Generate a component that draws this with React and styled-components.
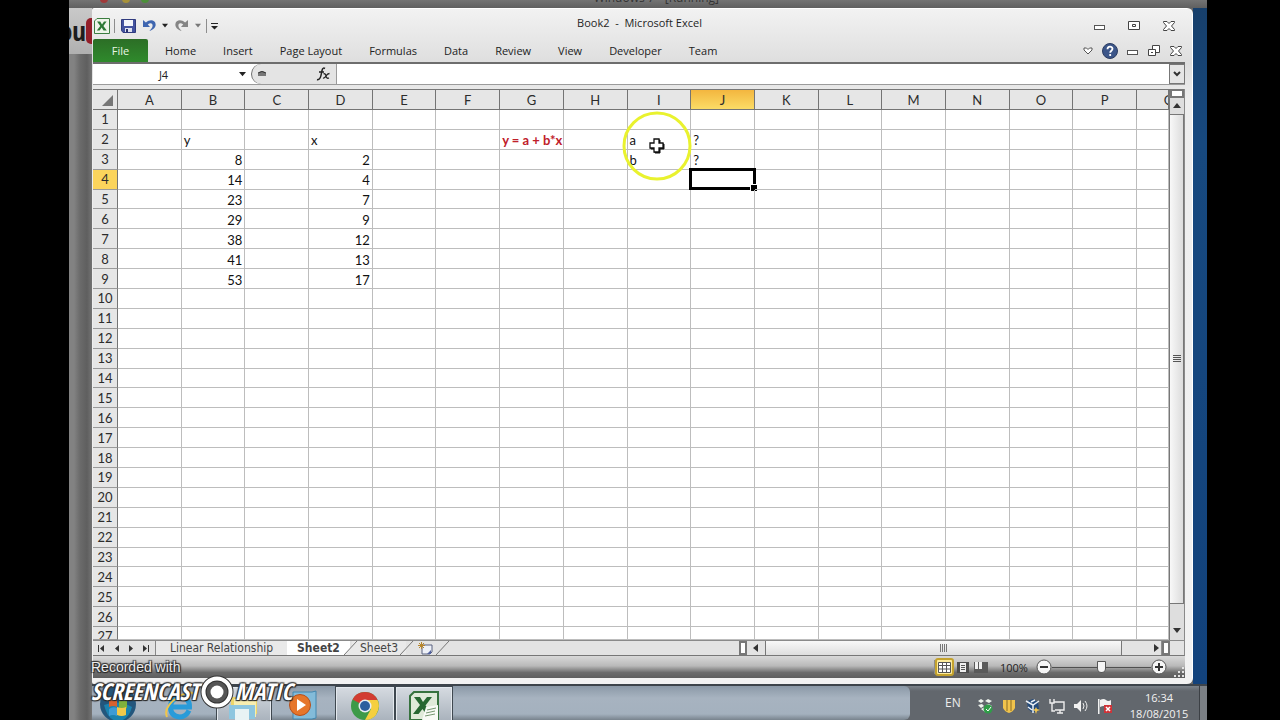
import React from "react";
import styled, { createGlobalStyle, css } from "styled-components";

const ui = `"Open Sans", "Noto Sans", sans-serif`;
const sheetFont = `Lato, "Open Sans", sans-serif`;
const tabFont = `"DejaVu Sans Condensed", "DejaVu Sans", sans-serif`;
const narrow = `"Open Sans Condensed", "Open Sans", sans-serif`;

const GlobalStyle = createGlobalStyle`
  * { box-sizing: border-box; }
  body { margin: 0; background: #000; overflow: hidden; font-family: ${ui}; }
  button, input { font: inherit; color: inherit; margin: 0; padding: 0; border: 0; background: none; outline: none; }
  svg { display: block; flex: none; }
`;

/* ---------- desktop ---------- */
const Desktop = styled.div`
  height: 100vh;
  margin: 0 73px 0 69px;
  position: relative;
  display: grid;
  grid-template-columns: 23px minmax(0, 1fr) 14px;
  grid-template-rows: 8px minmax(0, 1fr) 36px;
  background: #686868;
`;
const BackWindowEdge = styled.div`
  grid-column: 1 / -1;
  height: 8px;
  overflow: hidden;
  display: flex;
  justify-content: space-between;
  padding: 0 488px 0 26px;
  background: linear-gradient(#747474, #606060);
`;
const BackTitle = styled.span`
  font-size: 12px;
  line-height: 12px;
  margin-top: -8px;
  color: #333;
`;
const BackPage = styled.div`
  grid-row: 2 / 4;
  overflow: hidden;
  background: linear-gradient(90deg, #828282 0 5px, #6b6b6b 11px, #5f5f5f 18px, #747474);
`;
const Wallpaper = styled.div`
  background: linear-gradient(#173f6b, #17497f 20%, #12427c);
`;
const Logo = styled.div`
  display: flex;
  align-items: center;
  justify-content: flex-end;
  height: 46px;
  width: 23px;
  overflow: hidden;
  background: linear-gradient(#c9c9c9, #b0b0b0);
  font: bold 27px/40px ${narrow};
  color: #1d1d1d;
`;
const LogoRed = styled.span`
  flex: none;
  width: 6px;
  height: 26px;
  border-radius: 5px 0 0 5px;
  background: #931f2a;
`;

/* ---------- window ---------- */
const Window = styled.main`
  display: flex;
  flex-direction: column;
  min-width: 0;
  padding: 0 7px 6px 1px;
  border-radius: 2px 6px 6px 2px;
  border-top: 1px solid #fff;
  border-right: 1px solid #fff;
  background: linear-gradient(#f2f2f2, #dedede 54px, #ededed 90px, #f2f2f2);
`;
const TitleBar = styled.header`
  display: grid;
  grid-template-columns: 1fr auto 1fr;
  height: 30px;
  padding: 3px 0 0 1px;
`;
const Title = styled.h1`
  margin: 0;
  font-size: 11px;
  line-height: 22px;
  font-weight: 400;
  white-space: pre;
  color: #1f1f1f;
`;
const Tools = styled.div`
  display: flex;
  align-items: center;
  gap: ${(p) => p.$gap || 0}px;
  padding-right: ${(p) => p.$inset || 0}px;
  justify-content: ${(p) => (p.$end ? "flex-end" : "flex-start")};
`;
const IconButton = styled.button`
  display: flex;
  align-items: center;
  justify-content: center;
  width: ${(p) => p.$w || 16}px;
  height: ${(p) => p.$h || 18}px;
  flex: none;
`;
const Rule = styled.span`
  width: 1px;
  height: 14px;
  background: #8d8d8d;
`;
const Ribbon = styled.nav`
  display: flex;
  align-items: stretch;
  height: 25px;
  padding-right: 1px;
  border-bottom: 2px solid #6d6d6d;
`;
const RibbonTab = styled.button`
  padding: 0 13px 0 14px;
  font-size: 11px;
  line-height: 23px;
  color: #222;
  white-space: nowrap;
  ${(p) =>
    p.$file &&
    css`
      width: 55px;
      padding: 0;
      margin-right: 3px;
      border-radius: 2px 2px 0 0;
      background: linear-gradient(#2c6e26, #2f8a2c);
      color: #e9f6e4;
    `}
`;
const Spring = styled.span`
  flex: 1;
`;
const FormulaBar = styled.div`
  display: flex;
  height: 21px;
  background: #fff;
  border-bottom: 1px solid #9b9b9b;
`;
const NameBox = styled.input`
  width: 141px;
  text-align: center;
  font-size: 11px;
  color: #222;
`;
const FxZone = styled.div`
  display: flex;
  align-items: center;
  justify-content: space-between;
  width: 86px;
  padding: 0 5px 0 6px;
  margin-left: 1px;
  border-left: 1px solid #6d6d6d;
  border-right: 1px solid #9b9b9b;
  border-radius: 10px 0 0 10px;
  background: #e4e4e4;
`;
const FormulaInput = styled.input`
  flex: 1;
  min-width: 0;
  font-size: 11px;
`;
const Expand = styled(IconButton)`
  width: 16px;
  height: 20px;
  border: 1px solid #777;
  background: #e6e6e6;
`;
const Work = styled.section`
  flex: 1;
  min-height: 0;
  display: grid;
  grid-template-columns: minmax(0, 1fr) 15px;
  margin-top: 4px;
  border-right: 1px solid #8a8a8a;
`;
const GridArea = styled.div`
  min-width: 0;
  min-height: 0;
  overflow: hidden;
  background: #fff;
  border-top: 1px solid #777;
`;

/* ---------- cells ---------- */
const Sheet = styled.table`
  width: 100%;
  height: 100%;
  table-layout: fixed;
  border-collapse: separate;
  border-spacing: 0;
  font-family: ${sheetFont};
  font-size: 13px;
`;
const Head = styled.th`
  padding: 0;
  height: ${(p) => (p.$row ? "auto" : "20px")};
  line-height: ${(p) => (p.$short ? 12 : 18)}px;
  font-weight: 400;
  color: #2c2c2c;
  overflow: hidden;
  border-right: 1px solid #747474;
  border-bottom: 1px solid ${(p) => (p.$row ? "#9a9a9a" : "#747474")};
  background: ${(p) => (p.$on ? (p.$row ? "#fbd45c" : "linear-gradient(#f3b63f, #fbdc66)") : "#e6e6e6")};
`;
const PartialHead = styled.span`
  display: block;
  width: 64px;
  height: 18px;
`;
const PartialRow = styled.div`
  height: 11px;
  line-height: 16px;
`;
const Cell = styled.td`
  border-right: 1px solid #bdbdbd;
  border-bottom: 1px solid #bdbdbd;
  position: relative;
  padding: 2px 2px 0;
  line-height: 16px;
  text-align: ${(p) => (p.$num ? "right" : "left")};
  color: ${(p) => (p.$red ? "#c0202a" : "#111")};
  font-weight: ${(p) => (p.$red ? 700 : 400)};
  white-space: nowrap;
`;
const Selection = styled.span`
  position: absolute;
  inset: -2px -2px -1px -2px;
  border: 3px solid #000;
  &::after {
    content: "";
    position: absolute;
    right: -4px;
    bottom: -4px;
    width: 6px;
    height: 6px;
    border: solid #fff;
    border-width: 1px 0 0 1px;
    background: #000;
  }
`;
const Pointer = styled.svg`
  position: absolute;
  left: -6px;
  top: -19px;
  z-index: 3;
`;

/* ---------- scroll bars ---------- */
const VScroll = styled.div`
  display: flex;
  flex-direction: column;
  align-items: stretch;
  background: #dedede;
  border-left: 1px solid #777;
`;
const SplitV = styled.span`
  height: 9px;
  border: 2px solid #777;
  background: #fff;
`;
const ThumbV = styled.div`
  height: 490px;
  flex: 0 1 auto;
  min-height: 0;
  display: flex;
  align-items: center;
  justify-content: center;
  border: 1px solid #777;
  border-left: 0;
  background: linear-gradient(90deg, #f8f8f8, #dcdcdc);
`;
const Bottom = styled.div`
  display: flex;
  height: 16px;
  border-top: 1px solid #8a8a8a;
  border-bottom: 1px solid #777;
  border-right: 1px solid #8a8a8a;
  background: #e3e3e3;
`;
const NavButtons = styled.div`
  display: flex;
  width: 62px;
  padding-left: 1px;
`;
const SheetTab = styled.button`
  width: ${(p) => p.$w}px;
  font-family: ${tabFont};
  font-size: 12px;
  line-height: 14px;
  font-weight: ${(p) => (p.$on ? 700 : 400)};
  color: #444;
  background: ${(p) => (p.$on ? "#fff" : "#e9e9e9")};
  border-left: ${(p) => (p.$edge ? "1px solid #888" : 0)};
  white-space: nowrap;
`;
const Slant = styled.svg`
  margin: 0 -6px;
  position: relative;
`;
const HScroll = styled.div`
  display: flex;
  align-items: stretch;
  width: 431px;
  margin-right: 14px;
`;
const SplitH = styled.span`
  width: 8px;
  border: 2px solid #777;
  background: #fff;
`;
const ThumbH = styled.div`
  flex: 1;
  display: flex;
  align-items: center;
  justify-content: center;
  border: solid #777;
  border-width: 0 1px;
  background: linear-gradient(#f8f8f8, #dedede);
`;
const StatusBar = styled.footer`
  display: flex;
  align-items: center;
  height: 22px;
  padding-left: 4px;
  color: #222;
  background: linear-gradient(#d9d9d9, #b9b9b9 45%, #6c6c6c 75%, #5e5e5e);
`;
const Zoom = styled.span`
  width: 30px;
  margin: 0 6px 0 10px;
  font-size: 11px;
`;
const ViewButton = styled(IconButton)`
  width: ${(p) => (p.$on ? 19 : 18)}px;
  ${(p) =>
    p.$on &&
    css`
      border: 2px solid #c4a22d;
      border-radius: 3px;
      background: #fdeb9a;
    `}
`;
const Slider = styled.input`
  appearance: none;
  width: 99px;
  height: 16px;
  background: linear-gradient(#4f4f4f, #4f4f4f) center / 100% 1px no-repeat;
  &::-webkit-slider-thumb {
    appearance: none;
    width: 9px;
    height: 12px;
    border: 1px solid #555;
    border-radius: 1px 1px 5px 5px;
    background: #f5f5f5;
  }
`;
const Grip = styled.svg`
  align-self: flex-end;
  margin-left: 5px;
`;

/* ---------- taskbar ---------- */
const Taskbar = styled.div`
  grid-column: 2 / 4;
  display: flex;
  border-top: 2px solid #3d444b;
  background: linear-gradient(#7b828a, #62676d 5px, #62676d);
  overflow: hidden;
`;
const TaskApps = styled.div`
  display: flex;
  flex: 1;
  min-width: 0;
  margin-right: 35px;
  border-radius: 0 6px 6px 0;
  background: linear-gradient(#8b99a7, #a7b3c0 12px, #a4b1be 28px, #78838d);
`;
const AppButton = styled.button`
  display: flex;
  justify-content: center;
  align-items: flex-start;
  width: ${(p) => p.$w}px;
  padding-top: ${(p) => p.$top || 4}px;
  flex: none;
  ${(p) =>
    p.$open &&
    css`
      border: 1px solid #3f4850;
      border-bottom: 0;
      box-shadow: inset 1px 1px 0 #e4e9ee, inset -1px 0 0 #e4e9ee;
      background: linear-gradient(#d6dbe1, #aab3bd);
    `}
`;
const Tray = styled.div`
  display: flex;
  align-items: center;
  gap: 8px;
  padding-top: 5px;
  margin-right: 6px;
  color: #eee;
`;
const Lang = styled.span`
  width: 24px;
  margin-bottom: 6px;
  font-size: 12px;
  line-height: 16px;
`;
const Clock = styled.time`
  display: flex;
  flex-direction: column;
  align-items: center;
  width: 80px;
  margin-top: 4px;
  flex: none;
  font-size: 11px;
  line-height: 16px;
  color: #f2f2f2;
`;
const ShowDesktop = styled.button`
  width: 8px;
  border-left: 1px solid #3c4045;
  background: #7b8085;
`;
const Watermark = styled.div`
  position: absolute;
  left: 22px;
  bottom: 12px;
  z-index: 5;
  color: #fff;
  text-shadow: 1px 1px 1px #222, -1px -1px 1px #333, 1px -1px 1px #333, -1px 1px 1px #333;
`;
const Recorded = styled.div`
  font: 14px/16px "Liberation Sans", sans-serif;
  color: #eee;
`;
const Brand = styled.div`
  display: flex;
  align-items: center;
  height: 33px;
  font: italic bold 23px/33px ${narrow};
`;

/* ---------- small drawings ---------- */
const Tri = ({ dir = "down", s = 7, c = "#333" }) => {
  const d = { down: "M0 1h8L4 6z", up: "M0 6h8L4 1z", left: "M6 0v8L1 4z", right: "M1 0v8l5-4z" }[dir];
  return (
    <svg width={s} height={s} viewBox="0 0 8 8"><path d={d} fill={c} /></svg>
  );
};
const MinIcon = () => (
  <svg width="12" height="12" viewBox="0 0 12 12"><rect x="1.5" y="5.5" width="10" height="4" fill="#fff" stroke="#555" /></svg>
);
const MaxIcon = () => (
  <svg width="12" height="12" viewBox="0 0 12 12"><path d="M.5 1.500h11v8H.5zM4.500 4.500h3v2h-3z" fill="#fff" stroke="#444" /></svg>
);
const RestoreIcon = () => (
  <svg width="12" height="12" viewBox="0 0 12 12" fill="#fff" stroke="#444"><path d="M4.500.5h7v7h-7z" /><path d="M.5 4.500h7v6h-7z" /><path d="M3 7.500h2" /></svg>
);
const CloseIcon = () => (
  <svg width="12" height="12" viewBox="0 0 12 12"><path d="M.5 1.500h3.500l2 2 2-2h3.500v1L8.500 6l3 3.500v1H8l-2-2-2 2H.500v-1L3.500 6l-3-3.500z" fill="#fff" stroke="#444" /></svg>
);
const ExcelSmall = () => (
  <svg width="16" height="16" viewBox="0 0 16 16">
    <path d="M3 .5h12.500v15H.5V3z" fill="#eef5ea" stroke="#3b7d40" />
    <path d="M3 3.500h3.200L8 6.500l2-3h2.600L9.400 8l3.400 4.500H9.500L7.700 9.600 5.600 12.500H2.800L6.300 8z" fill="#2c7a35" />
  </svg>
);
const SaveIcon = () => (
  <svg width="15" height="14" viewBox="0 0 15 14">
    <path d="M.5.5h14v13H2l-1.500-2z" fill="#4353a0" stroke="#303b7e" /><path d="M3 1h9v6H3z" fill="#f2f4fa" /><path d="M4 9h7v4H4z" fill="#dde1f0" /><path d="M5 10h2v3H5z" fill="#2b3470" />
  </svg>
);
const UndoIcon = ({ flip, c }) => (
  <svg width="13" height="13" viewBox="0 0 13 13">
    <g transform={flip ? "matrix(-1 0 0 1 13 0)" : undefined}>
      <path d="M0 1v7h7L4.800 5.600C7 3.600 9.500 4 9.600 6.500c0 2-1.400 3.600-3.200 5.500C10.500 10.500 13 8.500 12.600 5 12 1 7 0 2.900 3.500z" fill={c} />
    </g>
  </svg>
);
const HelpIcon = () => (
  <svg width="16" height="16" viewBox="0 0 16 16">
    <circle cx="8" cy="8" r="7.500" fill="#3c5689" stroke="#2c3d62" />
    <path d="M5.500 6.200c0-3.400 5-3.200 5-.4 0 1.900-2.300 1.900-2.300 3.900M8.200 11v2" fill="none" stroke="#fff" strokeWidth="1.800" />
  </svg>
);
const NavIcon = ({ left, bar }) => (
  <svg width="9" height="9" viewBox="0 0 9 9" fill="#333">
    <g transform={left ? undefined : "matrix(-1 0 0 1 9 0)"}><path d="M7 1v7L3 4.500z" />{bar && <path d="M1 1h1v7H1z" />}</g>
  </svg>
);

const cols = "ABCDEFGHIJKLMNOP".split("");
const data = {
  B2: "y", D2: "x", G2: "y = a + b*x", I2: "a", J2: "?", I3: "b", J3: "?",
  B3: 8, B4: 14, B5: 23, B6: 29, B7: 38, B8: 41, B9: 53,
  D3: 2, D4: 4, D5: 7, D6: 9, D7: 12, D8: 13, D9: 17,
};
const rows = Array.from({ length: 26 }, (_, i) => i + 1);
const tabs = ["Home", "Insert", "Page Layout", "Formulas", "Data", "Review", "View", "Developer", "Team"];

function Grid() {
  return (
    <Sheet>
      <colgroup>
        <col width="25" />
        {cols.map((c) => <col key={c} />)}
        <col width="32" />
      </colgroup>
      <thead>
        <tr>
          <Head><svg width="24" height="18" viewBox="0 0 24 18"><path d="M20 4v11H9z" fill="#777" /></svg></Head>
          {cols.map((c) => <Head key={c} $on={c === "J"}>{c}</Head>)}
          <Head><PartialHead>Q</PartialHead></Head>
        </tr>
      </thead>
      <tbody>
        {rows.map((r) => (
          <tr key={r}>
            <Head scope="row" $row $on={r === 4}>{r}</Head>
            {[...cols, "Q"].map((c) => {
              const v = data[c + r];
              return (
                <Cell key={c} $num={typeof v === "number"} $red={c === "G"}>
                  {v}
                  {c + r === "J4" && <Selection />}
                  {c + r === "I2" && (
                    <Pointer width="70" height="70" viewBox="0 0 70 70">
                      <circle cx="35" cy="35" r="33" fill="none" stroke="#e9f22e" strokeWidth="3" />
                      <path d="M33 29h5v4h4v5h-4v4h-5v-4h-4v-5h4z" fill="#111" stroke="#111" />
                      <path d="M32 28h5v4h4v5h-4v4h-5v-4h-4v-5h4z" fill="#fff" stroke="#111" strokeWidth="1.300" />
                    </Pointer>
                  )}
                </Cell>
              );
            })}
          </tr>
        ))}
        <tr>
          <Head scope="row" $row $short><PartialRow>27</PartialRow></Head>
          {[...cols, "Q"].map((c) => <Cell key={c} />)}
        </tr>
      </tbody>
    </Sheet>
  );
}

export default function App() {
  return (
    <Desktop>
      <GlobalStyle />
      <BackWindowEdge>
        <svg width="60" height="8" viewBox="0 0 60 8"><circle cx="9" cy="-1" r="4" fill="#a03a3a" /><circle cx="31" cy="-1" r="4" fill="#a8923a" /><circle cx="50" cy="-1" r="4" fill="#4c8f3a" /></svg>
        <BackTitle>Windows 7 - [Running]</BackTitle>
      </BackWindowEdge>
      <BackPage><Logo>ou<LogoRed /></Logo></BackPage>

      <Window>
        <TitleBar>
          <Tools>
            <IconButton aria-label="Excel"><ExcelSmall /></IconButton>
            <Tools $gap={4}>
              <span />
              <Rule />
              <IconButton aria-label="Save" $w={18}><SaveIcon /></IconButton>
            </Tools>
            <IconButton aria-label="Undo" $w={24}><UndoIcon c="#3f66b0" /></IconButton>
            <IconButton aria-label="Undo list" $w={8}><Tri s={6} c="#222" /></IconButton>
            <IconButton aria-label="Redo" $w={24}><UndoIcon flip c="#858585" /></IconButton>
            <IconButton aria-label="Redo list" $w={10}><Tri s={6} c="#777" /></IconButton>
            <Tools $gap={3}>
              <span />
              <Rule />
              <IconButton aria-label="Customize" $w={8}>
                <svg width="7" height="8" viewBox="0 0 7 8" fill="#222"><path d="M0 1h7v1H0zM0 4h7L3.500 7.500z" /></svg>
              </IconButton>
            </Tools>
          </Tools>
          <Title>{"Book2  -  Microsoft Excel"}</Title>
          <Tools $end $gap={19} $inset={8}>
            <IconButton aria-label="Minimize"><MinIcon /></IconButton>
            <IconButton aria-label="Maximize"><MaxIcon /></IconButton>
            <IconButton aria-label="Close"><CloseIcon /></IconButton>
          </Tools>
        </TitleBar>
        <Ribbon>
          <RibbonTab $file>File</RibbonTab>
          {tabs.map((t) => <RibbonTab key={t}>{t}</RibbonTab>)}
          <Spring />
          <Tools $end $gap={6}>
            <IconButton aria-label="Ribbon"><svg width="10" height="8" viewBox="0 0 10 8"><path d="M1 1h2.500L5 2.500 6.500 1H9v2L5 7 1 3z" fill="#fff" stroke="#555" /></svg></IconButton>
            <IconButton aria-label="Help"><HelpIcon /></IconButton>
            <IconButton aria-label="Minimize book"><MinIcon /></IconButton>
            <IconButton aria-label="Restore book"><RestoreIcon /></IconButton>
            <IconButton aria-label="Close book"><CloseIcon /></IconButton>
          </Tools>
        </Ribbon>
        <FormulaBar>
          <NameBox aria-label="Name box" defaultValue="J4" />
          <IconButton aria-label="Names" $h={20}><Tri c="#222" /></IconButton>
          <FxZone>
            <svg width="8" height="8" viewBox="0 0 8 8"><path d="M0 6V3q4-4 8 0v3z" fill="#777" /><path d="M0 3q4-3 8 0" stroke="#333" fill="none" /></svg>
            <IconButton aria-label="Insert function">
              <svg width="14" height="16" viewBox="0 0 14 16" fill="none" stroke="#222"><path d="M9 2.500C6.500 1 6 4 5.500 7S4 14.500 1 13.500M3 6h5" strokeWidth="1.500" /><path d="M7.500 8q2-1 2.500 2t3 2M13.500 7.500q-2 0-3.500 2.500t-3 2" strokeWidth="1.300" /></svg>
            </IconButton>
          </FxZone>
          <FormulaInput aria-label="Formula" />
          <Expand aria-label="Expand formula bar"><svg width="8" height="6" viewBox="0 0 8 6"><path d="M1 1l3 3 3-3" fill="none" stroke="#333" strokeWidth="2" /></svg></Expand>
        </FormulaBar>

        <Work>
          <GridArea><Grid /></GridArea>
          <VScroll>
            <SplitV />
            <IconButton aria-label="Scroll up" $w={14} $h={16}><Tri dir="up" s={8} /></IconButton>
            <ThumbV><svg width="8" height="8" viewBox="0 0 8 8"><path d="M0 .5h8M0 2.500h8M0 4.500h8M0 6.500h8" stroke="#555" /></svg></ThumbV>
            <Spring />
            <IconButton aria-label="Scroll down" $w={14}><Tri s={8} /></IconButton>
          </VScroll>
        </Work>
        <Bottom>
          <NavButtons>
            <IconButton $w={15} $h={14} aria-label="First sheet"><NavIcon left bar /></IconButton>
            <IconButton $w={15} $h={14} aria-label="Previous sheet"><NavIcon left /></IconButton>
            <IconButton $w={14} $h={14} aria-label="Next sheet"><NavIcon /></IconButton>
            <IconButton $w={15} $h={14} aria-label="Last sheet"><NavIcon bar /></IconButton>
          </NavButtons>
          <SheetTab $w={132} $edge>Linear Relationship</SheetTab>
          <SheetTab $w={63} $on>Sheet2</SheetTab>
          <Slant width="14" height="14" viewBox="0 0 14 14"><path d="M0 14L13 0h1v14z" fill="#e9e9e9" /><path d="M0 14L13 0" stroke="#777" /></Slant>
          <SheetTab $w={54}>Sheet3</SheetTab>
          <Slant width="14" height="14" viewBox="0 0 14 14"><path d="M0 14L13 0" stroke="#777" /></Slant>
          <IconButton $w={34} $h={14} aria-label="Insert sheet">
            <svg width="15" height="13" viewBox="0 0 15 13"><path d="M4 3h10v7l-2 2H4z" fill="#eef1f8" stroke="#59617e" /><path d="M9 12l4-4v4z" fill="#5262a0" /><path d="M3.500 0v7M0 3.500h7M1 1l5 5M6 1L1 6" stroke="#b7862c" /></svg>
          </IconButton>
          <Slant width="14" height="14" viewBox="0 0 14 14"><path d="M0 14L13 0" stroke="#777" /></Slant>
          <Spring />
          <HScroll>
            <SplitH />
            <IconButton $w={18} $h={14} aria-label="Scroll left"><Tri dir="left" s={8} /></IconButton>
            <ThumbH><svg width="8" height="8" viewBox="0 0 8 8"><path d="M.5 0v8M2.500 0v8M4.500 0v8M6.500 0v8" stroke="#777" /></svg></ThumbH>
            <IconButton $w={40} $h={14} aria-label="Scroll right"><Spring /><Tri dir="right" s={8} /><Rule as="i" /></IconButton>
            <SplitH />
          </HScroll>
        </Bottom>
        <StatusBar>
          <Spring />
          <Rule />
          <Tools>
            <ViewButton $on aria-label="Normal"><svg width="13" height="11" viewBox="0 0 13 11"><path d="M.5.5h12v10H.5zM.5 3.500h12M.5 7h12M4.500.5v10M8.500.5v10" fill="#fff" stroke="#555" /></svg></ViewButton>
            <ViewButton aria-label="Page layout"><svg width="12" height="11" viewBox="0 0 12 11"><path d="M0 0h12v11H0z" fill="#4c4c4c" /><path d="M3 1h6v9H3z" fill="#eee" /><path d="M4 3.500h4M4 5.500h4M4 7.500h4" stroke="#555" /></svg></ViewButton>
            <ViewButton aria-label="Page break"><svg width="14" height="11" viewBox="0 0 14 11"><path d="M0 0h14v11H0z" fill="#5a5a5a" /><path d="M1 0h3v7H1zM5 0h3v7H5z" fill="#f0f0f0" /></svg></ViewButton>
          </Tools>
          <Zoom>100%</Zoom>
          <IconButton aria-label="Zoom out"><svg width="16" height="16" viewBox="0 0 16 16"><circle cx="8" cy="8" r="7" fill="#f5f5f5" stroke="#555" /><path d="M4 8h8" stroke="#333" strokeWidth="2" /></svg></IconButton>
          <Slider type="range" aria-label="Zoom" defaultValue="50" />
          <IconButton aria-label="Zoom in"><svg width="16" height="16" viewBox="0 0 16 16"><circle cx="8" cy="8" r="7" fill="#f5f5f5" stroke="#555" /><path d="M4 8h8M8 4v8" stroke="#333" strokeWidth="2" /></svg></IconButton>
          <Grip width="13" height="13" viewBox="0 0 13 13"><path d="M10 2h2v2h-2zM6 6h2v2H6zM10 6h2v2h-2zM2 10h2v2H2zM6 10h2v2H6zM10 10h2v2h-2z" fill="#e4e4e4" /></Grip>
        </StatusBar>
      </Window>
      <Wallpaper />

      <Taskbar>
        <TaskApps>
          <AppButton $w={52} $top={1} aria-label="Start">
            <svg width="38" height="36" viewBox="0 0 38 36"><circle cx="19" cy="17" r="18" fill="#23567c" /><path d="M5 18q14-6 28 2-4 14-14 14T5 18z" fill="#1b82ae" /><path d="M10 13q4-3 8-1v8q-4-2-8 0z" fill="#d8622f" /><path d="M20 13q4 2 8 0v8q-4 2-8 0z" fill="#7fb13d" /><path d="M10 22q4-3 8-1v8q-4-2-8 0z" fill="#3d9bd5" /><path d="M18 20q5 2 9 0v8q-4 2-9 0z" fill="#f2c94a" /></svg>
          </AppButton>
          <AppButton $w={72} aria-label="Internet Explorer">
            <svg width="32" height="30" viewBox="0 0 32 30" fill="none"><path d="M25 20.500Q22 27 15.500 27q-9-1-9-10t9.500-9.500Q26 8 25.500 17H9" stroke="#299bd9" strokeWidth="5" /><path d="M3 27Q-1 17 14 7 28-1 30 5" stroke="#f0c64a" strokeWidth="2" /></svg>
          </AppButton>
          <AppButton $w={56} $open aria-label="Explorer">
            <svg width="32" height="30" viewBox="0 0 32 30"><path d="M3 6h10l2-3h14v20H3z" fill="#edd66b" /><path d="M6 8h22v18H6z" fill="#f8eeb0" /><path d="M1 14h26v14H1z" fill="#8dc6df" /><path d="M7 18h14v12H7z" fill="#e8f3f4" /></svg>
          </AppButton>
          <AppButton $w={63} aria-label="Media player">
            <svg width="34" height="30" viewBox="0 0 34 30"><path d="M6 2h19l4-1v27l-4 1H6z" fill="#83bbd9" stroke="#4286ae" /><circle cx="13" cy="15" r="10.500" fill="#e6762b" stroke="#b84f19" /><path d="M10 9v12l9-6z" fill="#fff" /></svg>
          </AppButton>
          <AppButton $w={60} $open aria-label="Chrome">
            <svg width="30" height="30" viewBox="0 0 30 30"><circle cx="15" cy="15" r="14" fill="#3d9a48" /><path d="M15 15L2.500 8.500Q6 1 15 1t12.500 8H15z" fill="#d23c31" /><path d="M15 9h12.500Q31 16 26 24q-4 5-11 5l6-11z" fill="#f5cf3f" /><circle cx="15" cy="15" r="6.500" fill="#e8eef4" /><circle cx="15" cy="15" r="5" fill="#2d5f9e" /></svg>
          </AppButton>
          <AppButton $w={58} $open aria-label="Microsoft Excel">
            <svg width="30" height="30" viewBox="0 0 30 30"><path d="M5 1h24v28H1V5z" fill="#dfead9" stroke="#36723e" strokeWidth="2" /><path d="M5 6h6l3 5 4-5h5l-6.500 8.500L23 23h-6l-3.500-5-4 5H4l7-9z" fill="#276832" /><path d="M17 16l12-2v15H13z" fill="#f7faf5" /><path d="M18 19l9-2M17 22l9-2M16 25l10-2" stroke="#74966f" /></svg>
          </AppButton>
        </TaskApps>
        <Tray>
          <Lang>EN</Lang>
          <svg width="16" height="16" viewBox="0 0 16 16"><path d="M1 3l3-2 3 2-3 2zM8 3l3-2 4 2-3 2zM1 7l4-1 2 2-3 2zM9 7l3-1 3 2-3 2zM4 11l4-2 3 2-3 3z" fill="#edf3ed" /><circle cx="11" cy="11" r="4.500" fill="#2f9d48" /><path d="M9 11l2 2 3-4" stroke="#fff" fill="none" /></svg>
          <svg width="16" height="16" viewBox="0 0 16 16"><path d="M2 2h12v8q-2 4-6 5-4-1-6-5z" fill="#f0c34c" /><path d="M6 2v11M10 2v11" stroke="#8b6d24" /></svg>
          <svg width="16" height="16" viewBox="0 0 16 16"><path d="M2 3l6-2 5 3 1 7-6 4-5-4z" fill="#254b7b" /><path d="M1 3l7 4 6-4M8 7v8M3 9l4 3M10 2l-4 2" stroke="#e9eff5" strokeWidth="1.500" fill="none" /><path d="M11 9l1 2 3 1-3 1-1 3-1-3-2-1 2-1z" fill="#f1c64f" /></svg>
          <svg width="16" height="16" viewBox="0 0 16 16" fill="none" stroke="#eee" strokeWidth="1.400"><path d="M5 4h10v8H6M8 15h6M11 12v3M1 1v4h4V1M3 5v8h3" /></svg>
          <svg width="16" height="16" viewBox="0 0 16 16"><path d="M1 6h3l4-4v12l-4-4H1z" fill="#f1f1f1" /><path d="M10 5q2 3 0 6M12 3q4 5 0 10" fill="none" stroke="#eee" /></svg>
          <svg width="16" height="16" viewBox="0 0 16 16"><path d="M1 1h1.500v15H1zM3 2q4-2 6 0t5 0v7q-3 2-5 0T3 9z" fill="#f2f2f2" /><path d="M7 7h8v8H7z" fill="#cf3338" /><path d="M9 9l4 4M13 9l-4 4" stroke="#fff" strokeWidth="1.500" /></svg>
        </Tray>
        <Clock><span>16:34</span><span>18/08/2015</span></Clock>
        <ShowDesktop aria-label="Show desktop" />
      </Taskbar>

      <Watermark>
        <Recorded>Recorded with</Recorded>
        <Brand>
          SCREENCAST
          <svg width="36" height="34" viewBox="0 0 36 34"><circle cx="18" cy="17" r="13.500" fill="#555" stroke="#333" strokeWidth="6" /><circle cx="18" cy="17" r="13.500" fill="none" stroke="#fff" strokeWidth="4" /><circle cx="18" cy="17" r="6.500" fill="#fff" /></svg>
          MATIC
        </Brand>
      </Watermark>
    </Desktop>
  );
}
